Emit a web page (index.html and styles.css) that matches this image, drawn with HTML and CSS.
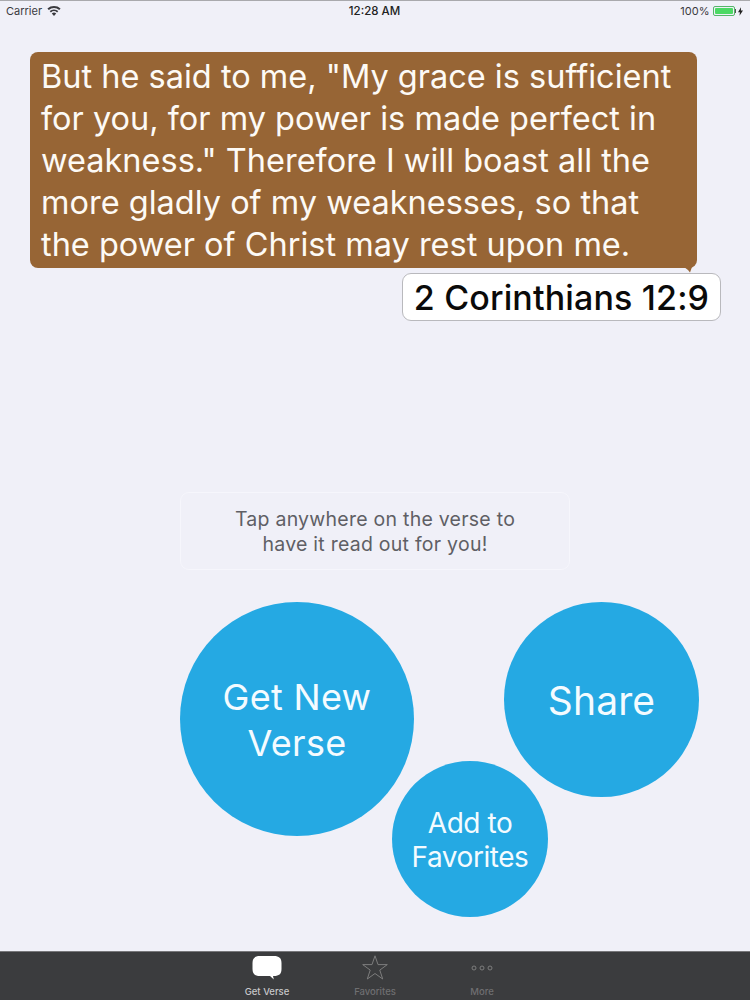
FILE: index.html
```html
<!DOCTYPE html>
<html lang="en">
<head>
<meta charset="utf-8">
<title>Get Verse</title>
<link rel="stylesheet" href="styles.css">
</head>
<body>
<div class="screen">
  <header class="status">
    <div class="status-left">
      <span>Carrier</span>
      <svg class="wifi" viewBox="0 0 14 10" width="14" height="10"><path d="M7 10 4.8 7.4a3.3 3.3 0 0 1 4.4 0zM3.9 6.4 2.7 5a6.6 6.6 0 0 1 8.6 0l-1.2 1.4a4.8 4.8 0 0 0-6.2 0zM1.8 4 .4 2.5a10 10 0 0 1 13.2 0L12.200 4a8 8 0 0 0-10.400 0z" fill="#3a3a3f"/></svg>
    </div>
    <div class="status-time">12:28 AM</div>
    <div class="status-right">
      <span>100%</span>
      <span class="battery"><span class="battery-fill"></span></span>
      <span class="battery-tip"></span>
      <svg class="bolt" viewBox="0 0 6 10" width="5" height="9"><path d="M3.600 0 0 5.800h2.300L1.800 10 6 3.900H3.500z" fill="#222"/></svg>
    </div>
  </header>

  <main class="content">
    <section class="verse-block">
      <div class="bubble">
        <p class="verse">But he said to me, "My grace is sufficient for you, for my power is made perfect in weakness." Therefore I will boast all the more gladly of my weaknesses, so that the power of Christ may rest upon me.</p>
        <svg class="tail" viewBox="0 0 8 6" width="8" height="6"><path d="M0 0h8L6 5.500 4 3z" fill="#976535"/></svg>
      </div>
      <div class="reference">2 Corinthians 12:9</div>
    </section>

    <div class="hint">Tap anywhere on the verse to<br>have it read out for you!</div>

    <section class="actions">
      <div class="actions-top">
        <button class="circle circle-large">Get New<br>Verse</button>
        <button class="circle circle-medium">Share</button>
      </div>
      <button class="circle circle-small">Add to<br>Favorites</button>
    </section>
  </main>

  <nav class="tabbar">
    <div class="tab tab-active">
      <svg class="tab-icon" viewBox="0 0 30 26" width="30" height="26"><path d="M8 1h14c5 0 7.500 2 7.500 7v6c0 5-2.500 7-7.500 7h-1l.8 3.500L18 21H8c-5 0-7.500-2-7.500-7V8C.5 3 3 1 8 1z" fill="#fff"/></svg>
      <span>Get Verse</span>
    </div>
    <div class="tab">
      <svg class="tab-icon" viewBox="0 0 30 26" width="30" height="26"><path d="M15 .8 18 9.600h9.300l-7.500 5.500 2.900 8.900L15 18.500 7.300 24l2.900-8.900-7.500-5.500H12z" fill="none" stroke="#7d7d7d" stroke-width="1"/></svg>
      <span>Favorites</span>
    </div>
    <div class="tab">
      <svg class="tab-icon" viewBox="0 0 30 26" width="30" height="26"><g fill="none" stroke="#7d7d7d" stroke-width="1"><circle cx="7" cy="13" r="2"/><circle cx="15" cy="13" r="2"/><circle cx="23" cy="13" r="2"/></g></svg>
      <span>More</span>
    </div>
  </nav>
</div>
</body>
</html>
```
FILE: styles.css
```css
* { box-sizing: border-box; }
html, body { margin: 0; padding: 0; }
body { font-family: Inter, "Liberation Sans", sans-serif; background: #f0f0f8; }
.screen { width: 750px; height: 1000px; display: flex; flex-direction: column; overflow: hidden; border-top: 1px solid #a9a9ad; }
.status { height: 20px; flex: none; display: grid; grid-template-columns: 1fr auto 1fr; align-items: center; padding: 0 7px 0 6px; font-size: 11px; color: #3a3a3f; }
.status-left { display: flex; align-items: center; gap: 5px; }
.status-time { font-weight: 500; font-size: 11.500px; color: #222; }
.status-right { display: flex; align-items: center; justify-content: flex-end; }
.battery { width: 22px; height: 10px; margin-left: 3px; padding: 1px; border: 1px solid #55b56a; border-radius: 2px; display: flex; }
.battery-fill { flex: 1; background: #4cd964; border-radius: 1px; }
.battery-tip { width: 1.500px; height: 4px; background: #555; margin-right: 2px; }
.content { flex: 1; display: flex; flex-direction: column; min-height: 0; }
.verse-block { padding: 31px 29px 0 30px; display: flex; flex-direction: column; }
.bubble { position: relative; width: 667px; height: 216px; background: #976535; border-radius: 8px; padding: 4px 10px 0 11px; }
.verse { margin: 0; color: #fdfaf5; font-size: 32.500px; line-height: 42px; letter-spacing: 0; }
.tail { position: absolute; right: 5px; bottom: -5px; }
.reference { align-self: flex-end; width: 319px; height: 48px; margin-top: 5px; background: #fff; border: 1px solid #b9b9bd; border-radius: 9px; display: flex; align-items: center; justify-content: center; font-size: 34px; font-weight: 500; letter-spacing: 0.15px; color: #0a0a0a; }
.hint { align-self: flex-start; width: 390px; height: 78px; margin: 171px 0 0 180px; padding-top: 1px; border: 1px solid #f6f6fc; border-radius: 9px; display: flex; align-items: center; justify-content: center; text-align: center; font-size: 19.500px; line-height: 25px; letter-spacing: 0.25px; color: #5f5f65; }
.actions { margin: 32px 0 0 180px; display: flex; flex-direction: column; align-items: flex-start; }
.actions-top { display: flex; align-items: flex-start; gap: 90px; }
.circle { border: 0; padding: 2px 0 0; border-radius: 50%; background: #25a9e3; color: #f4fbff; font-family: inherit; text-align: center; }
.circle-large { width: 234px; height: 234px; font-size: 36px; line-height: 46px; letter-spacing: 0.3px; }
.circle-medium { width: 195px; height: 195px; font-size: 39px; letter-spacing: 0.1px; }
.circle-small { width: 156px; height: 156px; margin: -75px 0 0 212px; font-size: 28px; line-height: 34px; letter-spacing: -0.45px; }
.tabbar { height: 49px; flex: none; background: #3b3c3e; border-top: 1px solid #77777a; display: flex; justify-content: center; gap: 0; }
.tab { width: 107px; display: flex; flex-direction: column; align-items: center; font-size: 9.500px; font-weight: 500; color: #6f6f71; }
.tab-active { color: #c9c9cb; padding-right: 2px; }
.tab-icon { margin-top: 3px; }
.tab span { margin-top: 5px; }
```
